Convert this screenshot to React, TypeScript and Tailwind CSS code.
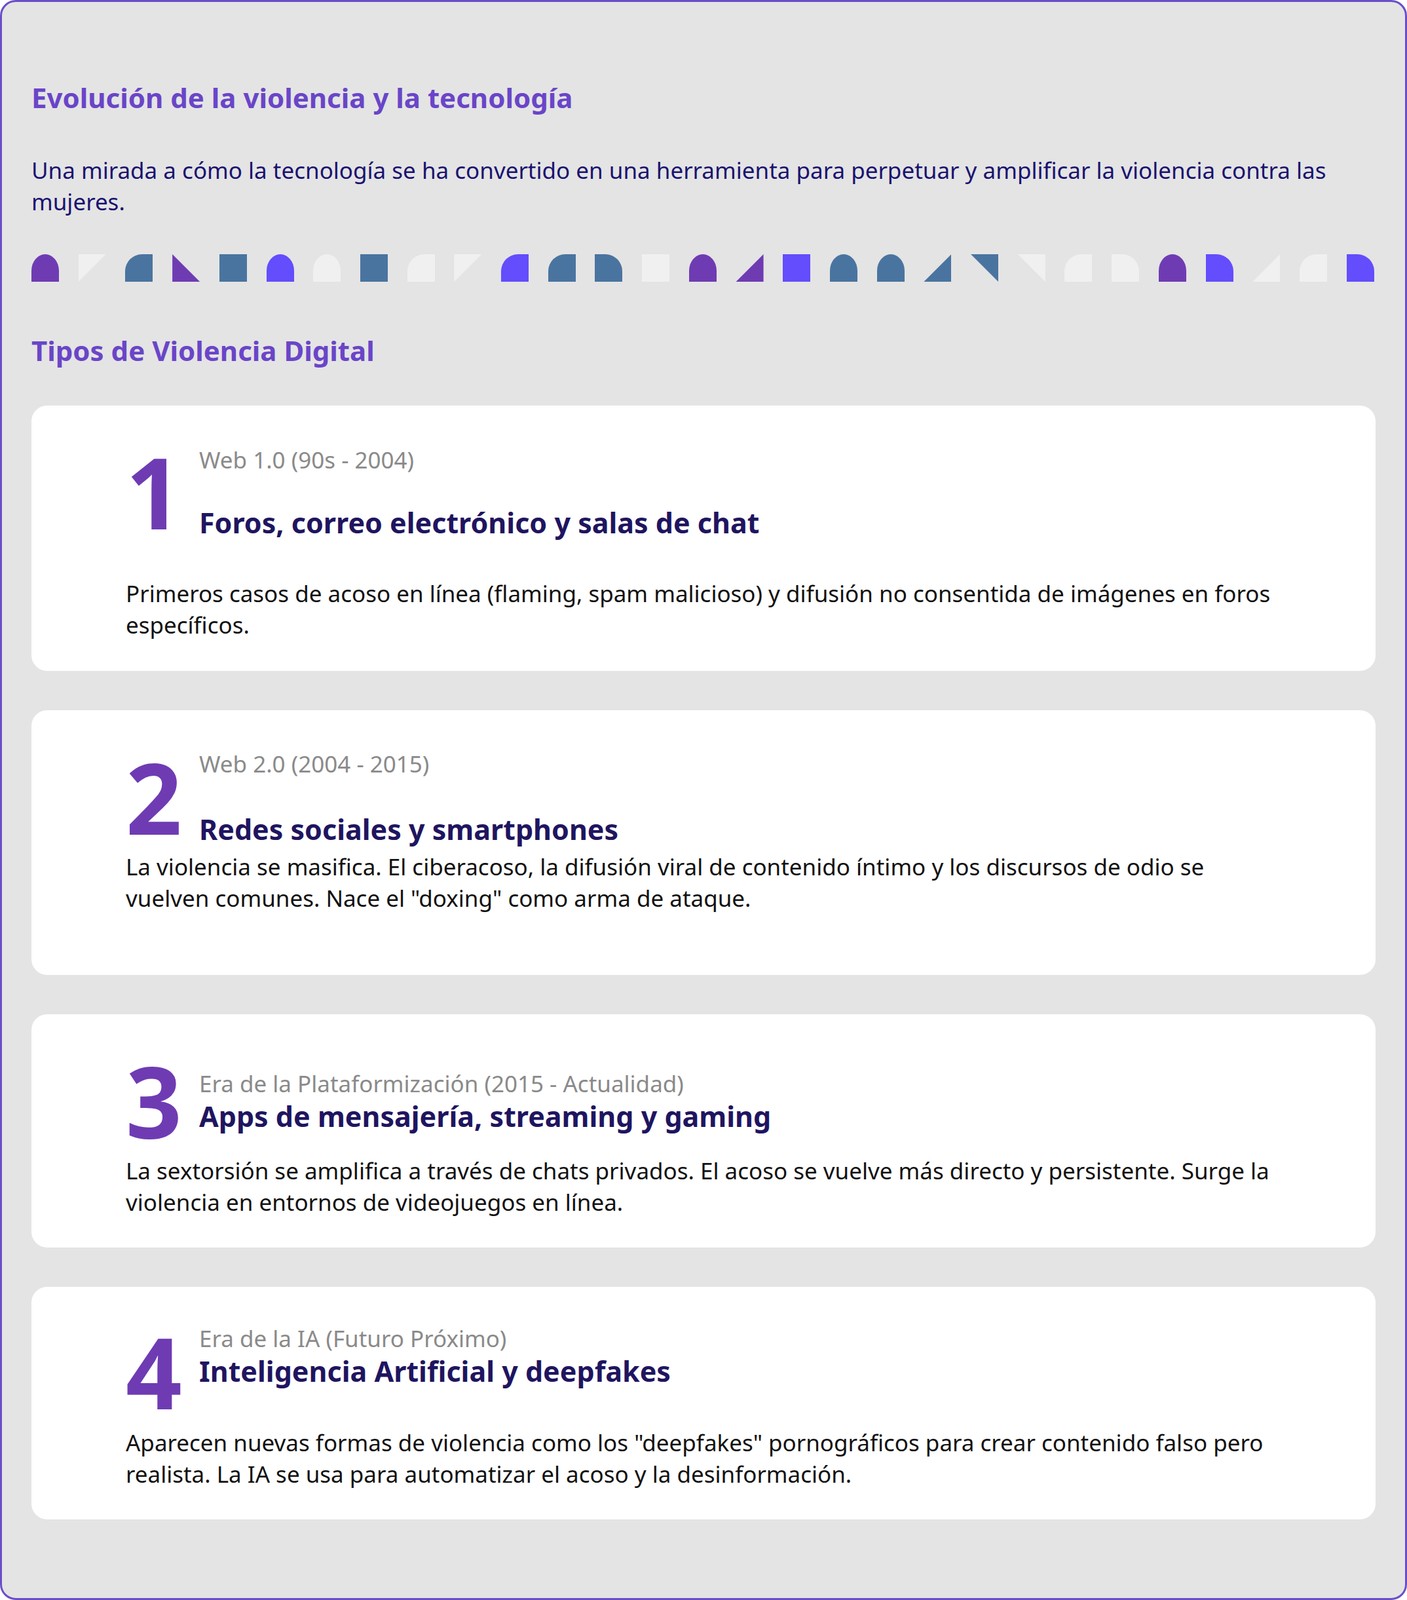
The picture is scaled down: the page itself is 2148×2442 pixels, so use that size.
import React from "react";

const P = "bg-[#6f3bb3]", I = "bg-[#634dfc]", B = "bg-[#4a74a0]", L = "bg-[#f0f0f0]";
type S = { c: string; k: string };
const shapes: S[] = [
  { c: P, k: "arch" }, { c: L, k: "tri-tl-tr-bl" }, { c: B, k: "tl" }, { c: P, k: "tri-tl-bl-br" },
  { c: B, k: "sq" }, { c: I, k: "arch" }, { c: L, k: "arch" }, { c: B, k: "sq" },
  { c: L, k: "tl" }, { c: L, k: "tri-tl-tr-bl" }, { c: I, k: "tl" }, { c: B, k: "tl" },
  { c: B, k: "tr" }, { c: L, k: "sq" }, { c: P, k: "arch" }, { c: P, k: "tri-bl-br-tr" },
  { c: I, k: "sq" }, { c: B, k: "arch" }, { c: B, k: "arch" }, { c: B, k: "tri-bl-br-tr" },
  { c: B, k: "tri-tl-tr-br" }, { c: L, k: "tri-tl-tr-br" }, { c: L, k: "tl" }, { c: L, k: "tr" },
  { c: P, k: "arch" }, { c: I, k: "tr" }, { c: L, k: "tri-bl-br-tr" }, { c: L, k: "tl" }, { c: I, k: "tr" },
];

function Shape({ s }: { s: S }) {
  const cls: Record<string, string> = {
    arch: "rounded-t-[50%_60%]",
    tl: "rounded-tl-[26px]",
    tr: "rounded-tr-[26px]",
    sq: "",
    "tri-tl-tr-bl": "[clip-path:polygon(0_0,100%_0,0_100%)]",
    "tri-tl-bl-br": "[clip-path:polygon(0_0,0_100%,100%_100%)]",
    "tri-bl-br-tr": "[clip-path:polygon(0_100%,100%_100%,100%_0)]",
    "tri-tl-tr-br": "[clip-path:polygon(0_0,100%_0,100%_100%)]",
  };
  return <div className={`w-[42px] h-[42px] ${s.c} ${cls[s.k]}`} />;
}

type C = { n: string; sub: string; title: string; body: string; pt: string; gap: string; mb: string; pb: string; num: string };
const cards: C[] = [
  { n: "1", sub: "Web 1.0 (90s - 2004)", title: "Foros, correo electrónico y salas de chat", body: "Primeros casos de acoso en línea (flaming, spam malicioso) y difusión no consentida de imágenes en foros específicos.", pt: "pt-[59px]", gap: "gap-[48px]", mb: "mt-[60px]", pb: "pb-[46px]", num: "" },
  { n: "2", sub: "Web 2.0 (2004 - 2015)", title: "Redes sociales y smartphones", body: "La violencia se masifica. El ciberacoso, la difusión viral de contenido íntimo y los discursos de odio se vuelven comunes. Nace el \"doxing\" como arma de ataque.", pt: "pt-[58px]", gap: "gap-[52px]", mb: "mt-[9px]", pb: "pb-[93px]", num: "" },
  { n: "3", sub: "Era de la Plataformización (2015 - Actualidad)", title: "Apps de mensajería, streaming y gaming", body: "La sextorsión se amplifica a través de chats privados. El acoso se vuelve más directo y persistente. Surge la violencia en entornos de videojuegos en línea.", pt: "pt-[82px]", gap: "gap-[2px]", mb: "mt-[35px]", pb: "pb-[45px]", num: "" },
  { n: "4", sub: "Era de la IA (Futuro Próximo)", title: "Inteligencia Artificial y deepfakes", body: "Aparecen nuevas formas de violencia como los \"deepfakes\" pornográficos para crear contenido falso pero realista. La IA se usa para automatizar el acoso y la desinformación.", pt: "pt-[55px]", gap: "gap-[2px]", mb: "mt-[61px]", pb: "pb-[45px]", num: "translate-y-[25px]" },
];

export default function App() {
  return (
    <div className="w-[2148px] h-[2442px] bg-[#e4e4e4] border-[3px] border-[#6a4fc8] rounded-[24px] px-[45px] pt-[122px] [font-family:'Liberation_Sans',Arial,sans-serif]">
      <h1 className="text-[42px] leading-[48px] font-bold text-[#6a45c8]">Evolución de la violencia y la tecnología</h1>
      <p className="mt-[63px] text-[35px] leading-[48px] text-[#1a1370]">
        Una mirada a cómo la tecnología se ha convertido en una herramienta para perpetuar y amplificar la violencia contra las mujeres.
      </p>
      <div className="mt-[56px] flex justify-between w-[2050px]">
        {shapes.map((s, i) => <Shape key={i} s={s} />)}
      </div>
      <h2 className="mt-[81px] text-[42px] leading-[48px] font-bold text-[#6a45c8]">Tipos de Violencia Digital</h2>
      <div className="mt-[60px] flex flex-col gap-[60px] w-[2052px]">
        {cards.map((c) => (
          <div key={c.n} className={`bg-white rounded-[24px] px-[144px] ${c.pt} ${c.pb}`}>
            <div className="flex items-center">
              <div className={`w-[112px] h-[98px] shrink-0 flex items-center text-[150px] leading-none font-bold text-[#6f3bb3] ${c.num}`}>{c.n}</div>
              <div className={`flex flex-col ${c.gap}`}>
                <div className="text-[35px] leading-[48px] text-[#8a8a8a]">{c.sub}</div>
                <div className="text-[43px] leading-[48px] font-bold text-[#1f1560]">{c.title}</div>
              </div>
            </div>
            <p className={`${c.mb} text-[35px] leading-[48px] text-[#111] pr-[10px]`}>{c.body}</p>
          </div>
        ))}
      </div>
    </div>
  );
}
